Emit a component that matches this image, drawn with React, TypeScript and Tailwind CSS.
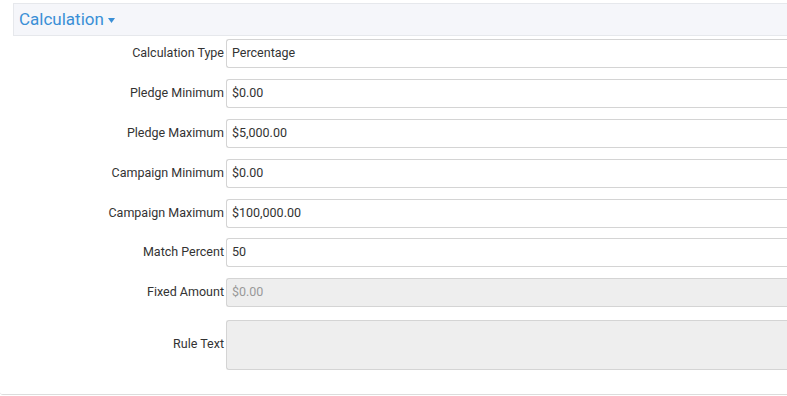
import React from "react";

const rows: { label: string; value: string; disabled?: boolean; mt: number }[] = [
  { label: "Calculation Type", value: "Percentage", mt: 3 },
  { label: "Pledge Minimum", value: "$0.00", mt: 11 },
  { label: "Pledge Maximum", value: "$5,000.00", mt: 11 },
  { label: "Campaign Minimum", value: "$0.00", mt: 11 },
  { label: "Campaign Maximum", value: "$100,000.00", mt: 11 },
  { label: "Match Percent", value: "50", mt: 10 },
  { label: "Fixed Amount", value: "$0.00", disabled: true, mt: 11 },
];

export default function App() {
  return (
    <div
      className="w-[787px] h-[396px] overflow-hidden bg-white"
      style={{ fontFamily: "Roboto, 'Liberation Sans', sans-serif" }}
    >
      <div className="h-[395px] border-b border-[#dcdcdc] rounded-bl-[3px] pt-[3px]">
        <div className="ml-[13px] h-[33px] border border-[#e6e8ec] border-r-0 bg-[#f5f6fa] flex items-center pl-[5px]">
          <span className="text-[17px] text-[#3a8fd6] leading-none">Calculation</span>
          <svg width="7" height="5" viewBox="0 0 7 5" className="ml-[4px] mt-[1px]">
            <path d="M0 0 L7 0 L3.5 5 Z" fill="#3a8fd6" />
          </svg>
        </div>
        {rows.map((r) => (
          <div key={r.label} className="flex items-center" style={{ marginTop: r.mt }}>
            <div className="w-[226px] shrink-0 text-right pr-[2px] text-[12.5px] leading-[16px] text-[#333] -mt-[2px]">{r.label}</div>
            <div
              className={
                "flex-1 h-[29px] border border-[#d4d4d4] border-r-0 rounded-l-[3px] flex items-center pl-[5px] text-[12.5px] leading-[16px] " +
                (r.disabled ? "bg-[#eeeeee] text-[#999]" : "bg-white text-[#333]")
              }
            >
              <span className="-mt-[1px]">{r.value}</span>
            </div>
          </div>
        ))}
        <div className="flex items-center mt-[13px]">
          <div className="w-[226px] shrink-0 text-right pr-[2px] text-[12.5px] leading-[16px] text-[#333] -mt-[2px]">Rule Text</div>
          <div className="flex-1 h-[50px] border border-[#d4d4d4] border-r-0 rounded-l-[3px] bg-[#eeeeee]" />
        </div>
      </div>
    </div>
  );
}
